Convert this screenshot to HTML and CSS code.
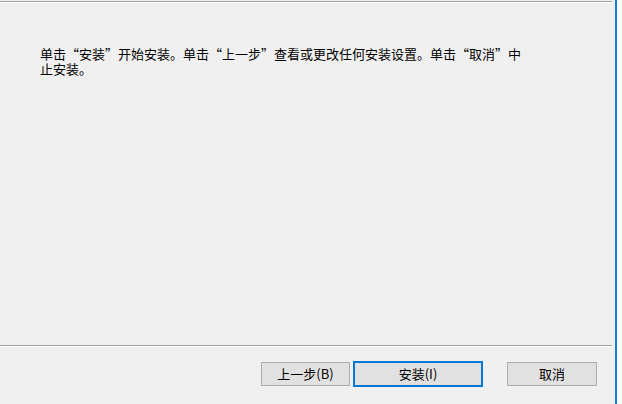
FILE: index.html
```html
<!DOCTYPE html>
<html lang="zh-CN">
<head>
<meta charset="utf-8">
<link rel="stylesheet" href="styles.css">
</head>
<body>
<div class="frame">
  <div class="dialog">
    <div class="etch etch-top"></div>
    <div class="content">
      <p class="message">单击“安装”开始安装。单击“上一步”查看或更改任何安装设置。单击“取消”中止安装。</p>
    </div>
    <div class="etch etch-bottom"></div>
    <div class="buttons">
      <button class="btn btn-back">上一步(B)</button>
      <button class="btn btn-install">安装(I)</button>
      <button class="btn btn-cancel">取消</button>
    </div>
  </div>
  <div class="accent"></div>
  <div class="outside"></div>
</div>
</body>
</html>
```
FILE: styles.css
```css
html, body {
  margin: 0;
  padding: 0;
  background: #f0f0f0;
}
body {
  width: 622px;
  height: 404px;
  overflow: hidden;
  font-family: "Noto Sans CJK SC", "Noto Sans", sans-serif;
  color: #000;
}
.frame {
  display: flex;
  width: 622px;
  height: 404px;
}
.dialog {
  width: 615px;
  display: flex;
  flex-direction: column;
  background: #f0f0f0;
}
.accent {
  width: 2px;
  background: #1a7ad4;
}
.outside {
  flex: 1;
  background: #ffffff;
}
.etch {
  width: 612px;
  height: 0;
  border-top: 1px solid #a0a0a0;
  border-bottom: 1px solid #ffffff;
}
.etch-top {
  margin-top: 1px;
}
.content {
  flex: 1;
  padding: 43px 0 0 40px;
}
.message {
  margin: 0;
  width: 488px;
  font-size: 13px;
  line-height: 15px;
}
.etch-bottom {
  margin-bottom: 14px;
}
.buttons {
  display: flex;
  align-items: center;
  height: 26px;
  padding-left: 261px;
  margin-bottom: 17px;
}
.btn {
  box-sizing: border-box;
  height: 24px;
  margin: 0;
  padding: 0;
  background: #e1e1e1;
  border: 1px solid #adadad;
  border-radius: 0;
  font-family: "Noto Sans CJK SC", "Noto Sans", sans-serif;
  font-size: 13px;
  line-height: 20px;
  color: #000;
}
.btn-back {
  width: 89px;
}
.btn-install {
  width: 130px;
  height: 26px;
  margin-left: 3px;
  border: 2px solid #0078d7;
}
.btn-cancel {
  width: 90px;
  margin-left: 24px;
}
```
